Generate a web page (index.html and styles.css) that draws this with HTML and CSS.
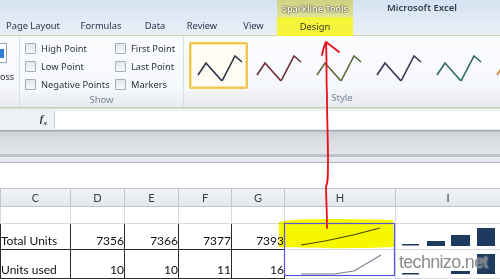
FILE: index.html
```html
<!DOCTYPE html>
<html>
<head>
  <meta charset="utf-8">
  <title>Sparkline Tools</title>
  <link rel="stylesheet" href="styles.css">
</head>
<body>
  <div class="app">
    <div class="tabbar">
      <div class="tabs">
        <span class="tab t-page">Page Layout</span>
        <span class="tab t-formulas">Formulas</span>
        <span class="tab t-data">Data</span>
        <span class="tab t-review">Review</span>
        <span class="tab t-view">View</span>
      </div>
      <div class="context">
        <div class="context-title">Sparkline Tools</div>
        <div class="tab design">Design</div>
      </div>
      <div class="app-title">Microsoft Excel</div>
    </div>

    <div class="ribbon">
      <div class="group g-left">
        <div class="group-body">
          <div class="mini-icon"><span></span></div>
          <div class="mini-text">oss</div>
        </div>
        <div class="group-label"></div>
      </div>
      <div class="group g-show">
        <div class="group-body checks">
          <label class="check"><span class="box"></span>High Point</label>
          <label class="check"><span class="box"></span>First Point</label>
          <label class="check"><span class="box"></span>Low Point</label>
          <label class="check"><span class="box"></span>Last Point</label>
          <label class="check"><span class="box"></span>Negative Points</label>
          <label class="check"><span class="box"></span>Markers</label>
        </div>
        <div class="group-label">Show</div>
      </div>
      <div class="group g-style">
        <div class="group-body gallery">
          <div class="style-item selected"><svg width="50" height="30" viewBox="0 0 50 30"><polyline points="4,24 12,12 28,30 41,5 48,11" stroke="#2b3147"/></svg></div>
          <div class="style-item"><svg width="50" height="30" viewBox="0 0 50 30"><polyline points="4,24 12,12 28,30 41,5 48,11" stroke="#6b2c35"/></svg></div>
          <div class="style-item"><svg width="50" height="30" viewBox="0 0 50 30"><polyline points="4,24 12,12 28,30 41,5 48,11" stroke="#5e6a3c"/></svg></div>
          <div class="style-item"><svg width="50" height="30" viewBox="0 0 50 30"><polyline points="4,24 12,12 28,30 41,5 48,11" stroke="#3a3150"/></svg></div>
          <div class="style-item"><svg width="50" height="30" viewBox="0 0 50 30"><polyline points="4,24 12,12 28,30 41,5 48,11" stroke="#2c6a62"/></svg></div>
          <div class="style-item"><svg width="50" height="30" viewBox="0 0 50 30"><polyline points="4,24 12,12 28,30 41,5 48,11" stroke="#d9822b"/></svg></div>
        </div>
        <div class="group-label">Style</div>
      </div>
    </div>

    <div class="formula-bar">
      <div class="namebox"><span class="fx">f<sub>x</sub></span></div>
      <div class="formula-input"></div>
    </div>

    <div class="gray-band">
      <div class="band-top"></div>
      <div class="band-line"></div>
      <div class="band-bottom"></div>
    </div>

    <div class="blank-area"></div>

    <table class="sheet">
      <colgroup>
        <col class="c-c"><col class="c-n"><col class="c-n"><col class="c-n2"><col class="c-n2"><col class="c-h"><col class="c-i">
      </colgroup>
      <tr class="head">
        <th>C</th><th>D</th><th>E</th><th>F</th><th>G</th><th>H</th><th>I</th>
      </tr>
      <tr class="blank">
        <td></td><td></td><td></td><td></td><td></td><td></td><td></td>
      </tr>
      <tr class="data r1">
        <td class="b lbl">Total Units</td>
        <td class="b num">7356</td>
        <td class="b num">7366</td>
        <td class="b num">7377</td>
        <td class="b num">7393</td>
        <td class="spark">
          <svg width="110" height="24" viewBox="0 0 110 24"><polyline points="16,20 40,16 68,10 95,3" stroke="#4a4a30"/></svg>
        </td>
        <td class="spark">
          <svg width="104" height="24" viewBox="0 0 104 24">
            <rect x="6" y="19" width="17" height="1.5" fill="#1f3a5f"/>
            <rect x="31" y="16" width="18" height="5" fill="#1f3a5f"/>
            <rect x="55" y="10" width="19" height="11" fill="#1f3a5f"/>
            <rect x="81" y="3" width="18" height="18" fill="#1f3a5f"/>
          </svg>
        </td>
      </tr>
      <tr class="data r2">
        <td class="b lbl">Units used</td>
        <td class="b num">10</td>
        <td class="b num">10</td>
        <td class="b num">11</td>
        <td class="b num">16</td>
        <td class="spark">
          <svg width="110" height="27" viewBox="0 0 110 27"><polyline points="16,23 49,23 69,20 96,4" stroke="#7b8090"/></svg>
        </td>
        <td class="spark">
          <svg width="104" height="27" viewBox="0 0 104 27">
            <rect x="6" y="22" width="17" height="1.5" fill="#1f3a5f"/>
            <rect x="55" y="20" width="19" height="3" fill="#1f3a5f"/>
            <rect x="81" y="3" width="18" height="20" fill="#1f3a5f"/>
          </svg>
        </td>
      </tr>
    </table>

    <svg class="overlay" width="500" height="279" viewBox="0 0 500 279">
      <path class="hilite" d="M279,222 C300,218 340,219 393,220 L394,247 C350,249 310,248 278,247 C281,240 278,232 279,222 Z"/>
      <rect x="284.5" y="223.5" width="110" height="52" fill="none" stroke="#5a55d6" stroke-width="1.2"/>
      <path class="arrow" d="M327,228 C327,210 326,196 326,186 C328,184 328,175 328,160 C328,140 327,120 327,95 C326,75 327,60 326,43"/>
      <path class="arrow" d="M322,55 C323,50 324,46 326,42 C330,45 334,48 339,52"/>
    </svg>
    <div class="watermark">technizo.net</div>
  </div>
</body>
</html>
```

FILE: styles.css
```css
html, body {
  margin: 0;
  padding: 0;
}

body {
  width: 500px;
  height: 279px;
  overflow: hidden;
  background: #fff;
  font-family: "Noto Sans", "Open Sans", sans-serif;
}

.app {
  position: relative;
  width: 500px;
  height: 279px;
  overflow: hidden;
}

/* tab strip */
.tabbar {
  display: flex;
  height: 36px;
  background: linear-gradient(#d6e2f1, #e2ebf6 60%, #e8eff8);
  border-bottom: 1px solid #cfd59a;
  box-sizing: border-box;
}

.tabs {
  display: flex;
  align-items: flex-end;
  width: 277px;
  flex: none;
}

.tab {
  display: block;
  height: 19px;
  line-height: 19px;
  font-size: 9.3px;
  color: #25364d;
  text-align: center;
  white-space: nowrap;
}

.t-page { width: 66px; }
.t-formulas { width: 70px; }
.t-data { width: 38px; }
.t-review { width: 56px; }
.t-view { width: 47px; }

.context {
  display: flex;
  flex-direction: column;
  width: 76px;
  flex: none;
}

.context-title {
  height: 17px;
  line-height: 17px;
  font-size: 9px;
  text-align: center;
  color: #fdfdf2;
  font-weight: 600;
  background: linear-gradient(#cfd283, #e0e29c);
  text-shadow: 0 0 1px #4a4a24, 0 0 1px #4a4a24, 0 0 2px #6e6e3a;
  white-space: nowrap;
}

.design {
  background: #f4f43a;
  border-radius: 2px 2px 0 0;
  color: #3a3a20;
}

.app-title {
  padding: 1px 0 0 34px;
  font-size: 9.5px;
  color: #2e3d50;
  font-weight: 600;
  white-space: nowrap;
}

/* ribbon */
.ribbon {
  display: flex;
  height: 72px;
  background: linear-gradient(#fbfcfe, #f3f6fa);
  border-bottom: 1px solid #c6cfb0;
  box-sizing: border-box;
}

.group {
  display: flex;
  flex-direction: column;
  border-right: 1px solid #d9dfe6;
  flex: none;
}

.group-body {
  flex: 1;
}

.group-label {
  height: 16px;
  line-height: 14px;
  font-size: 9.5px;
  color: #76879a;
  text-align: center;
  background: linear-gradient(#f1f3f5, #e9ecef);
}

.g-left {
  width: 19px;
}

.mini-icon {
  width: 6px;
  height: 18px;
  margin-top: 7px;
  border: 1px solid #9aa4b0;
  border-left: none;
  background: #fff;
  display: flex;
  align-items: center;
}

.mini-icon span {
  display: block;
  width: 4px;
  height: 9px;
  background: #2f7bd8;
}

.mini-text {
  margin-top: 7px;
  font-size: 9px;
  color: #333;
  white-space: nowrap;
}

.g-show {
  width: 163px;
}

.checks {
  display: grid;
  grid-template-columns: 90px 68px;
  grid-auto-rows: 18px;
  padding: 3px 0 0 5px;
}

.check {
  display: flex;
  align-items: center;
  gap: 5px;
  font-size: 9.3px;
  color: #2c3440;
  white-space: nowrap;
}

.box {
  flex: none;
  width: 9px;
  height: 9px;
  border: 1px solid #a5adb8;
  background: linear-gradient(#e4e7ea, #f8f9fa);
  border-radius: 1px;
}

.g-style {
  flex: 1;
  min-width: 0;
  border-right: none;
}

.gallery {
  display: flex;
  padding: 6px 0 0 5px;
  overflow: hidden;
}

.style-item {
  flex: none;
  width: 60px;
  height: 47px;
  box-sizing: border-box;
  display: flex;
  align-items: center;
  justify-content: center;
}

.style-item polyline {
  fill: none;
  stroke-width: 1.6;
}

.style-item.selected {
  width: 59px;
  border: 2px solid #efc651;
  border-radius: 2px;
  background: #fffdf3;
  box-shadow: inset 0 0 0 1px #fbe7a2;
}

/* formula bar */
.formula-bar {
  display: flex;
  height: 23px;
  background: #eef1f5;
  border-top: 1px solid #d8dde3;
  border-bottom: 1px solid #9ea8b4;
  box-sizing: border-box;
  padding: 2px 0 1px;
}

.namebox {
  width: 55px;
  display: flex;
  justify-content: flex-end;
  align-items: center;
  padding-right: 7px;
  box-sizing: border-box;
  border-right: 1px solid #c3cad3;
}

.fx {
  font-family: "Liberation Serif", serif;
  font-style: italic;
  font-weight: bold;
  font-size: 11px;
  color: #333;
}

.fx sub {
  font-size: 7px;
}

.formula-input {
  flex: 1;
  background: #fff;
}

/* grey splitter band */
.gray-band {
  height: 32px;
  display: flex;
  flex-direction: column;
}

.band-top {
  height: 22px;
  background: linear-gradient(#cfd3d8, #dadde1 40%, #e4e6e9);
  border-top: 1px solid #b9bfc6;
}

.band-line {
  height: 3px;
  background: #bcc3cb;
}

.band-bottom {
  flex: 1;
  background: #e6e9ed;
  border-bottom: 1px solid #aab1b9;
}

.blank-area {
  height: 25px;
  background: #fff;
}

/* sheet */
.sheet {
  border-collapse: collapse;
  table-layout: fixed;
  width: 500px;
  font-family: Lato, "Liberation Sans", sans-serif;
  font-size: 12px;
  color: #111;
}

.c-c { width: 70px; }
.c-n { width: 54px; }
.c-n2 { width: 53px; }
.c-h { width: 111px; }
.c-i { width: 105px; }

.sheet td, .sheet th {
  padding: 0;
  border: 1px solid #d6d9dd;
}

.head th {
  height: 17px;
  font-weight: normal;
  font-size: 11px;
  color: #3a3f46;
  background: linear-gradient(#f2f4f7, #e3e7ec);
  border: 1px solid #bfc6cf;
}

.blank td {
  height: 16px;
}

.r1 td {
  height: 24px;
}

.r2 td {
  height: 27px;
}

.sheet td.b {
  border: 1.5px solid #2a2a2a;
  vertical-align: bottom;
  padding-bottom: 1px;
}

.lbl {
  padding-left: 2px;
  white-space: nowrap;
}

.num {
  text-align: right;
  padding-right: 1px;
}

.sheet td.spark {
  vertical-align: bottom;
  line-height: 0;
}

.spark polyline {
  fill: none;
  stroke-width: 1.2;
}

/* annotations drawn over the screenshot */
.overlay {
  position: absolute;
  left: 0;
  top: 0;
  pointer-events: none;
}

.hilite {
  fill: #f7f700;
  mix-blend-mode: multiply;
}

.arrow {
  fill: none;
  stroke: #e8101a;
  stroke-width: 1.8;
  stroke-linecap: round;
}

.watermark {
  position: absolute;
  left: 399px;
  top: 252px;
  font-family: "Liberation Sans", sans-serif;
  font-size: 18px;
  color: rgba(110, 110, 110, 0.8);
  text-shadow: 0 0 2px #fff;
  letter-spacing: -0.7px;
}
```
